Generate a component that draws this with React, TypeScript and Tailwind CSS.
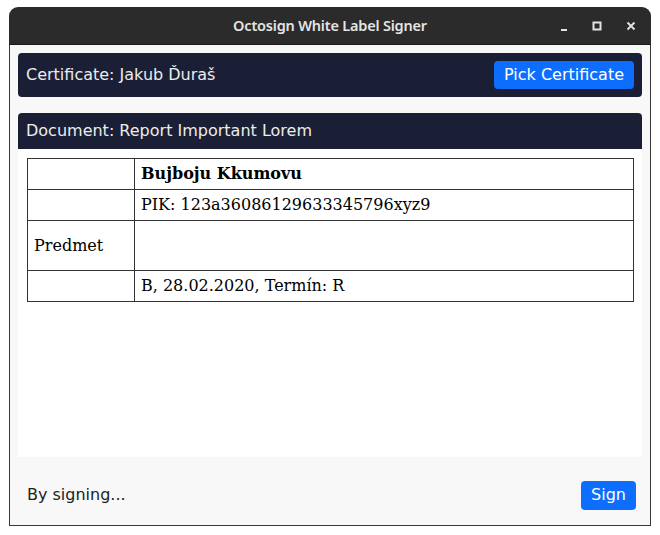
import React from 'react';

const rows = [
  { label: '', value: 'Bujboju Kkumovu', bold: true, h: 'h-[31px]' },
  { label: '', value: 'PIK: 123a36086129633345796xyz9', bold: false, h: 'h-[31px]' },
  { label: 'Predmet', value: '', bold: false, h: 'h-[50px]' },
  { label: '', value: 'B, 28.02.2020, Termín: R', bold: false, h: 'h-[31px]' },
];

const TitleBar = () => (
  <div className="relative h-[38px] shrink-0 bg-[#2b2b2b] rounded-t-[9px] flex items-center justify-center border-b border-[#1a1a1a]">
    <span className="text-[#e4e4e4] text-[14.5px] font-semibold font-['Noto_Sans',sans-serif] tracking-[-0.2px]">
      Octosign White Label Signer
    </span>
    <div className="absolute right-[14px] top-0 h-full flex items-center gap-[22px] text-[#e4e4e4]">
      <svg width="12" height="12" viewBox="0 0 12 12">
        <rect x="4" y="9" width="6" height="2" fill="currentColor" />
      </svg>
      <svg width="12" height="12" viewBox="0 0 12 12">
        <rect x="2.5" y="2.5" width="7" height="7" fill="none" stroke="currentColor" strokeWidth="2" />
      </svg>
      <svg width="12" height="12" viewBox="0 0 12 12">
        <path d="M2.5 2.5 L9.5 9.5 M9.5 2.5 L2.5 9.5" stroke="currentColor" strokeWidth="1.8" />
      </svg>
    </div>
  </div>
);

export default function App() {
  return (
    <div className="w-[660px] h-[535px] bg-white pt-[7px] pl-[9px] font-['DejaVu_Sans',sans-serif]">
      <div className="w-[642px] h-[519px] flex flex-col">
        <TitleBar />
        <div className="flex-1 flex flex-col bg-[#f8f8f8] border-x border-b border-[#3a3a3a]">
          <div className="px-[8px] pt-[8px]">
            <div className="h-[44px] bg-[#1b1f35] rounded-[4px] flex items-center justify-between pl-[8px] pr-[8px]">
              <span className="text-[#ececec] text-[16px]">Certificate: Jakub Ďuraš</span>
              <button className="h-[28px] w-[140px] bg-[#0d6efd] rounded-[4px] text-white text-[16px]">
                Pick Certificate
              </button>
            </div>
            <div className="mt-[16px] h-[36px] bg-[#1b1f35] rounded-t-[4px] flex items-center pl-[8px]">
              <span className="text-[#ececec] text-[16px]">Document: Report Important Lorem</span>
            </div>
            <div className="h-[308px] bg-white pt-[9px] pl-[9px] pr-[8px]">
              <table className="w-full border-collapse font-['DejaVu_Serif',serif] text-[16px] text-black">
                <tbody>
                  {rows.map((r, i) => (
                    <tr key={i} className={r.h}>
                      <td className="w-[107px] border border-[#333] px-[6px] p-0">{r.label}</td>
                      <td className={`border border-[#333] px-[6px] p-0 ${r.bold ? 'font-bold' : ''}`}>{r.value}</td>
                    </tr>
                  ))}
                </tbody>
              </table>
            </div>
          </div>
          <div className="flex-1 flex items-center justify-between pl-[17px] pr-[14px] pt-[8px]">
            <span className="text-[#222] text-[16px]">By signing...</span>
            <button className="h-[29px] w-[55px] bg-[#0d6efd] rounded-[4px] text-white text-[16px]">Sign</button>
          </div>
        </div>
      </div>
    </div>
  );
}
